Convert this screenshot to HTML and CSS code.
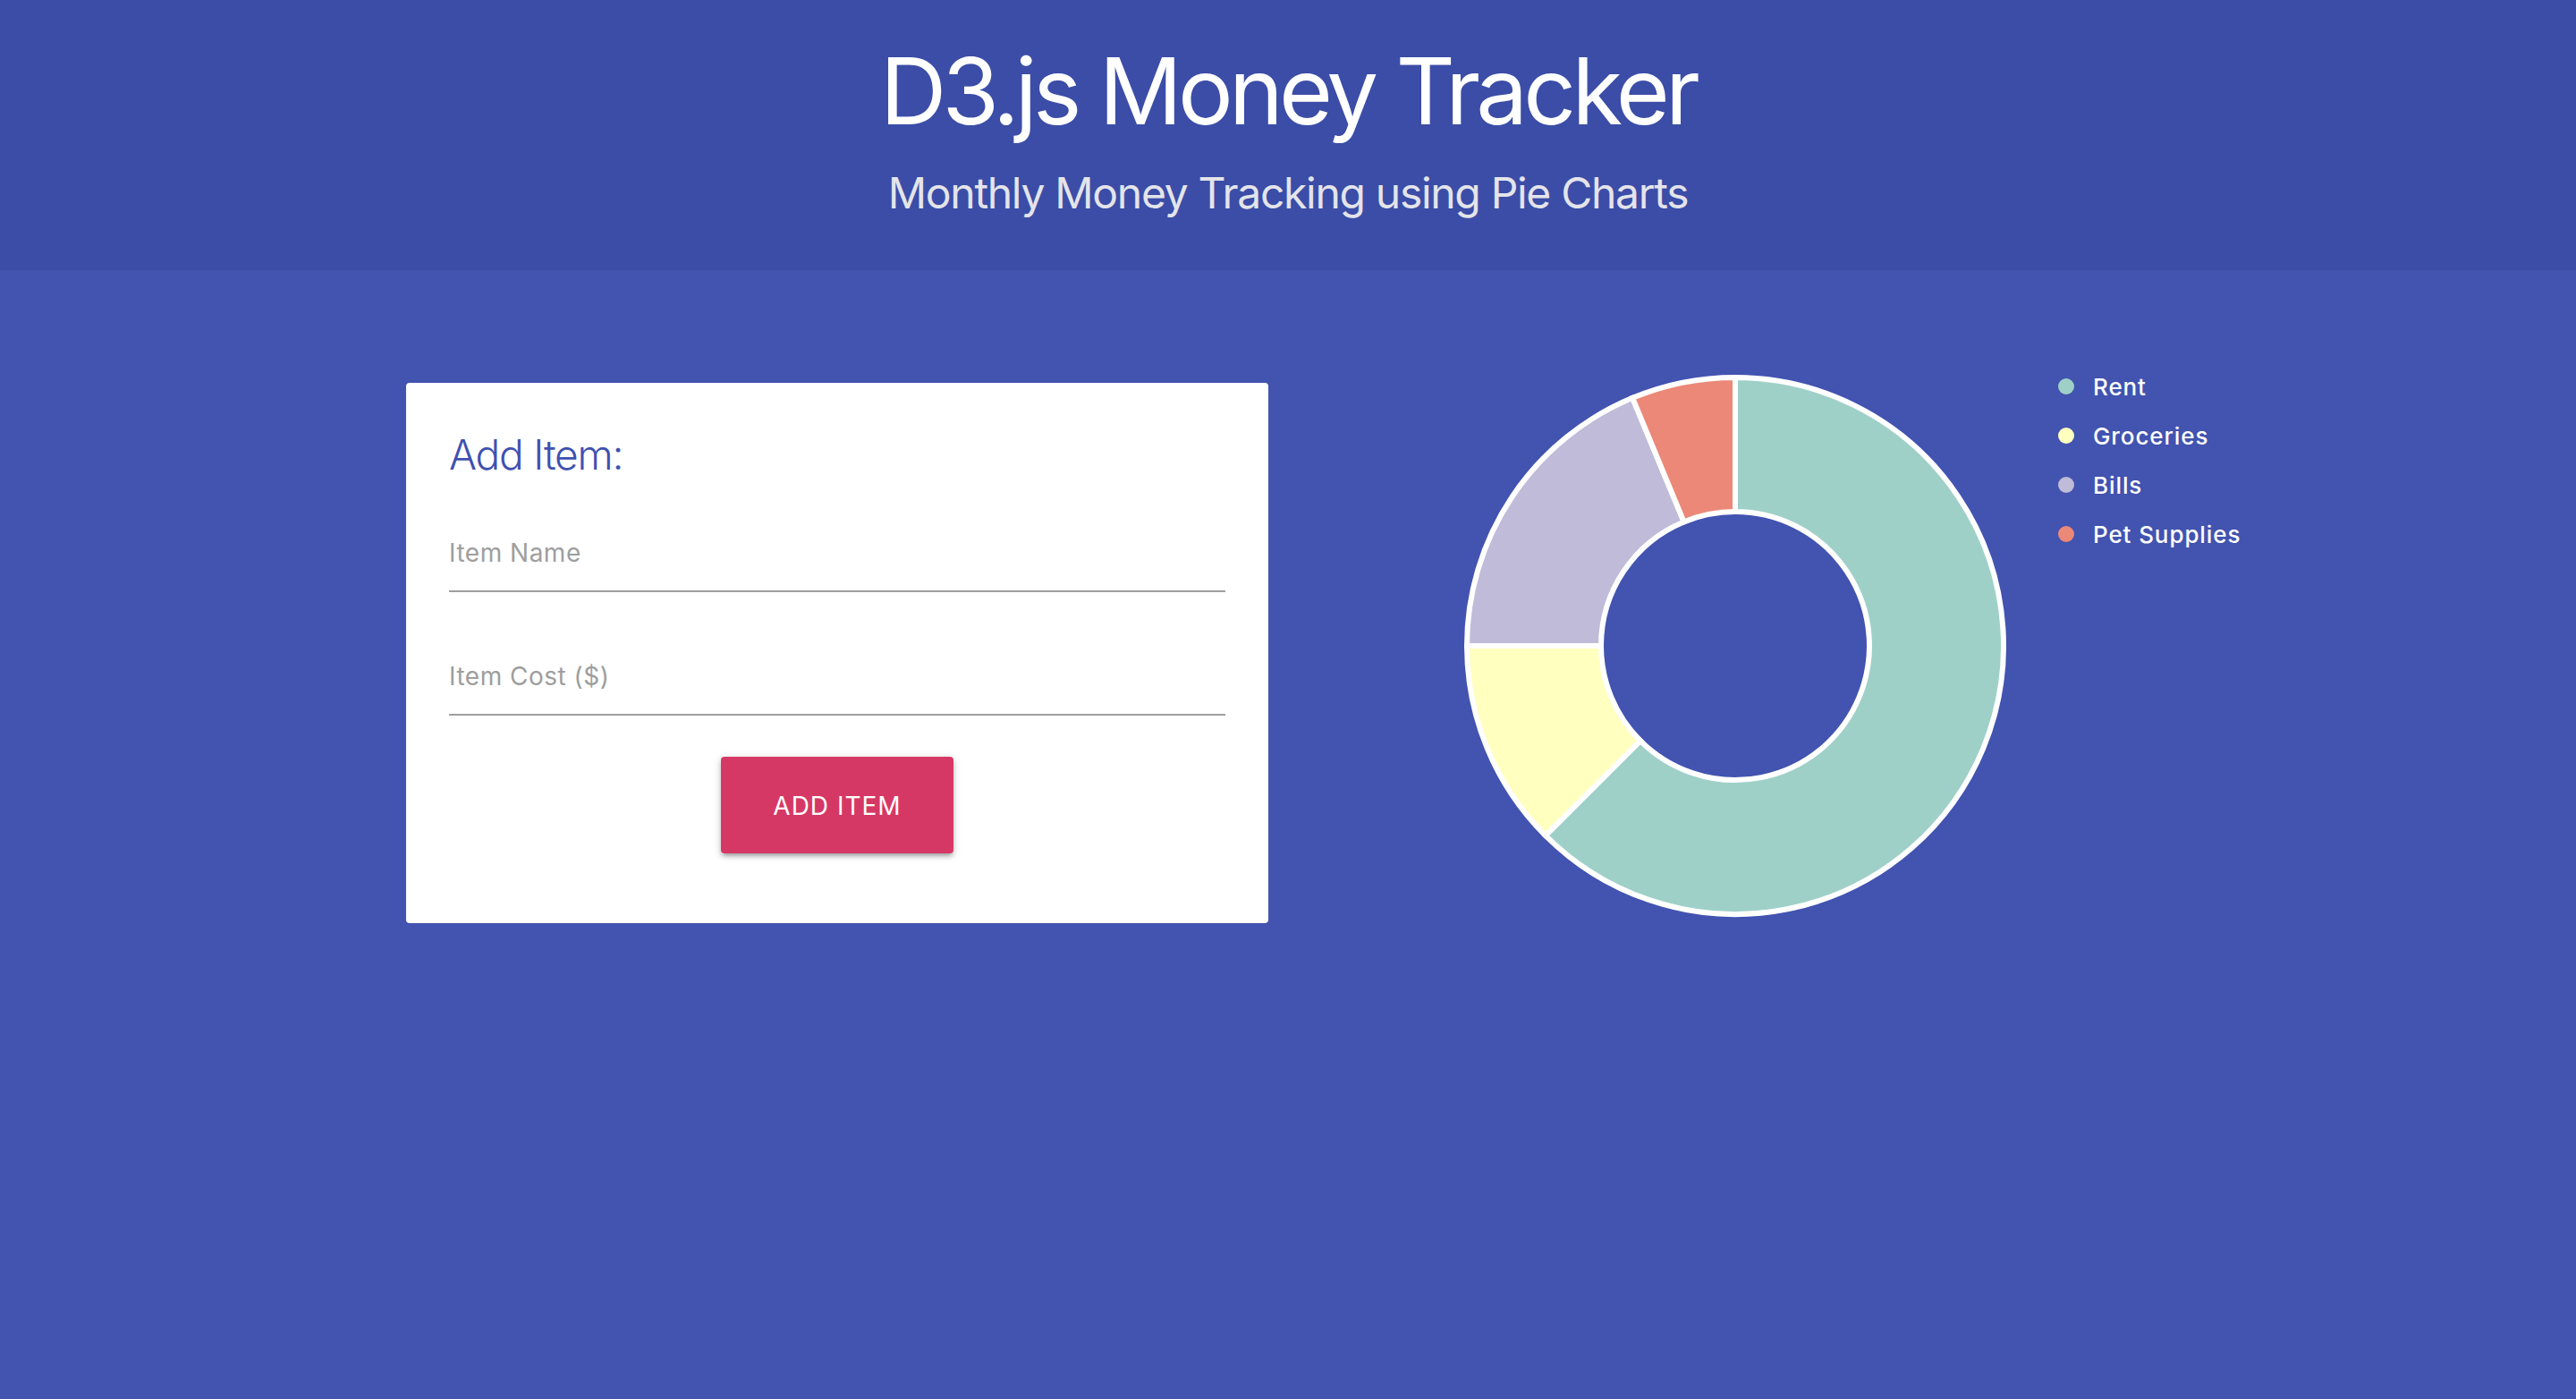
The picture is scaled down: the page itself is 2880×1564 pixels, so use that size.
FILE: index.html
```html
<!DOCTYPE html>
<html lang="en">
<head>
<meta charset="utf-8">
<title>D3.js Money Tracker</title>
<link rel="stylesheet" href="styles.css">
</head>
<body>
<header class="header">
  <h1 class="title">D3.js Money Tracker</h1>
  <p class="subtitle">Monthly Money Tracking using Pie Charts</p>
</header>
<main class="main">
  <div class="row">
    <div class="col col-form">
      <div class="card">
        <div class="card-title">Add Item:</div>
        <div class="field">
          <div class="field-box"><span class="field-label">Item Name</span></div>
        </div>
        <div class="field">
          <div class="field-box"><span class="field-label">Item Cost ($)</span></div>
        </div>
        <div class="btn-wrap">
          <button class="btn" type="button">Add Item</button>
        </div>
      </div>
    </div>
    <div class="col col-chart">
      <svg class="chart" width="900" height="900" viewBox="0 0 900 900">
        <g class="pie" stroke="#ffffff" stroke-width="6" stroke-linejoin="miter">
          <path class="seg-rent" d="M310,10 A300,300 0 1 1 97.87,522.13 L203.93,416.07 A150,150 0 1 0 310,160 Z"/>
          <path class="seg-groc" d="M97.87,522.13 A300,300 0 0 1 10,310 L160,310 A150,150 0 0 0 203.93,416.07 Z"/>
          <path class="seg-bills" d="M10,310 A300,300 0 0 1 195.20,32.84 L252.60,171.42 A150,150 0 0 0 160,310 Z"/>
          <path class="seg-pet" d="M195.20,32.84 A300,300 0 0 1 310,10 L310,160 A150,150 0 0 0 252.60,171.42 Z"/>
        </g>
        <g class="legend">
          <circle class="seg-rent" cx="680" cy="20" r="9"/>
          <text x="710" y="30">Rent</text>
          <circle class="seg-groc" cx="680" cy="75" r="9"/>
          <text x="710" y="85">Groceries</text>
          <circle class="seg-bills" cx="680" cy="130" r="9"/>
          <text x="710" y="140">Bills</text>
          <circle class="seg-pet" cx="680" cy="185" r="9"/>
          <text x="710" y="195">Pet Supplies</text>
        </g>
      </svg>
    </div>
  </div>
</main>
</body>
</html>
```
FILE: styles.css
```css
html, body {
  margin: 0;
  padding: 0;
}
body {
  background: #4253b0;
  font-family: Inter, "Noto Sans", "Liberation Sans", sans-serif;
  min-height: 1564px;
}
.header {
  box-sizing: border-box;
  height: 302px;
  background: #3b4da7;
  padding-top: 40px;
  text-align: center;
}
.title {
  margin: 0;
  font-size: 103px;
  line-height: 124px;
  font-weight: 400;
  color: #ffffff;
  letter-spacing: -4.8px;
}
.subtitle {
  margin: 22px 0 0;
  font-size: 48px;
  line-height: 60px;
  font-weight: 400;
  color: #e4e4ea;
  letter-spacing: -1.3px;
}
.main {
  padding-top: 110px;
}
.row {
  width: 2016px;
  margin: 0 auto;
  display: flex;
  align-items: flex-start;
}
.col {
  flex-shrink: 0;
}
.col-form {
  box-sizing: border-box;
  width: 1008px;
  padding: 16px 22px 0;
}
.card {
  box-sizing: border-box;
  width: 964px;
  background: #ffffff;
  border-radius: 4px;
  padding: 48px;
  display: flex;
  flex-direction: column;
}
.card-title {
  font-size: 46px;
  font-weight: 300;
  line-height: 64px;
  color: #3f51b1;
  letter-spacing: -1.2px;
}
.field {
  margin: 30px 0 16px;
}
.field-box {
  box-sizing: border-box;
  height: 92px;
  padding-top: 28px;
  border-bottom: 2px solid #9e9e9e;
}
.field-label {
  display: block;
  font-size: 28px;
  line-height: 40px;
  color: #9e9e9e;
  letter-spacing: 0.5px;
}
.btn-wrap {
  display: flex;
  justify-content: center;
  margin: 30px 0;
}
.btn {
  width: 260px;
  height: 108px;
  border: none;
  border-radius: 4px;
  background: #d63865;
  color: #ffffff;
  font-family: Inter, "Noto Sans", "Liberation Sans", sans-serif;
  font-size: 28px;
  letter-spacing: 1px;
  text-transform: uppercase;
  padding: 2px 0 0;
  box-shadow: 0 4px 4px 0 rgba(0,0,0,0.14), 0 6px 2px -4px rgba(0,0,0,0.12), 0 2px 10px 0 rgba(0,0,0,0.2);
}
.col-chart {
  padding-left: 190px;
}
.chart {
  display: block;
  overflow: visible;
}
.seg-rent { fill: #9ed0c8; }
.seg-groc { fill: #ffffbf; }
.seg-bills { fill: #bfbbd8; }
.seg-pet { fill: #ec8878; }
.legend text {
  fill: #ffffff;
  font-family: Inter, "Noto Sans", "Liberation Sans", sans-serif;
  font-size: 26px;
  font-weight: 500;
  letter-spacing: 0.9px;
}
```
